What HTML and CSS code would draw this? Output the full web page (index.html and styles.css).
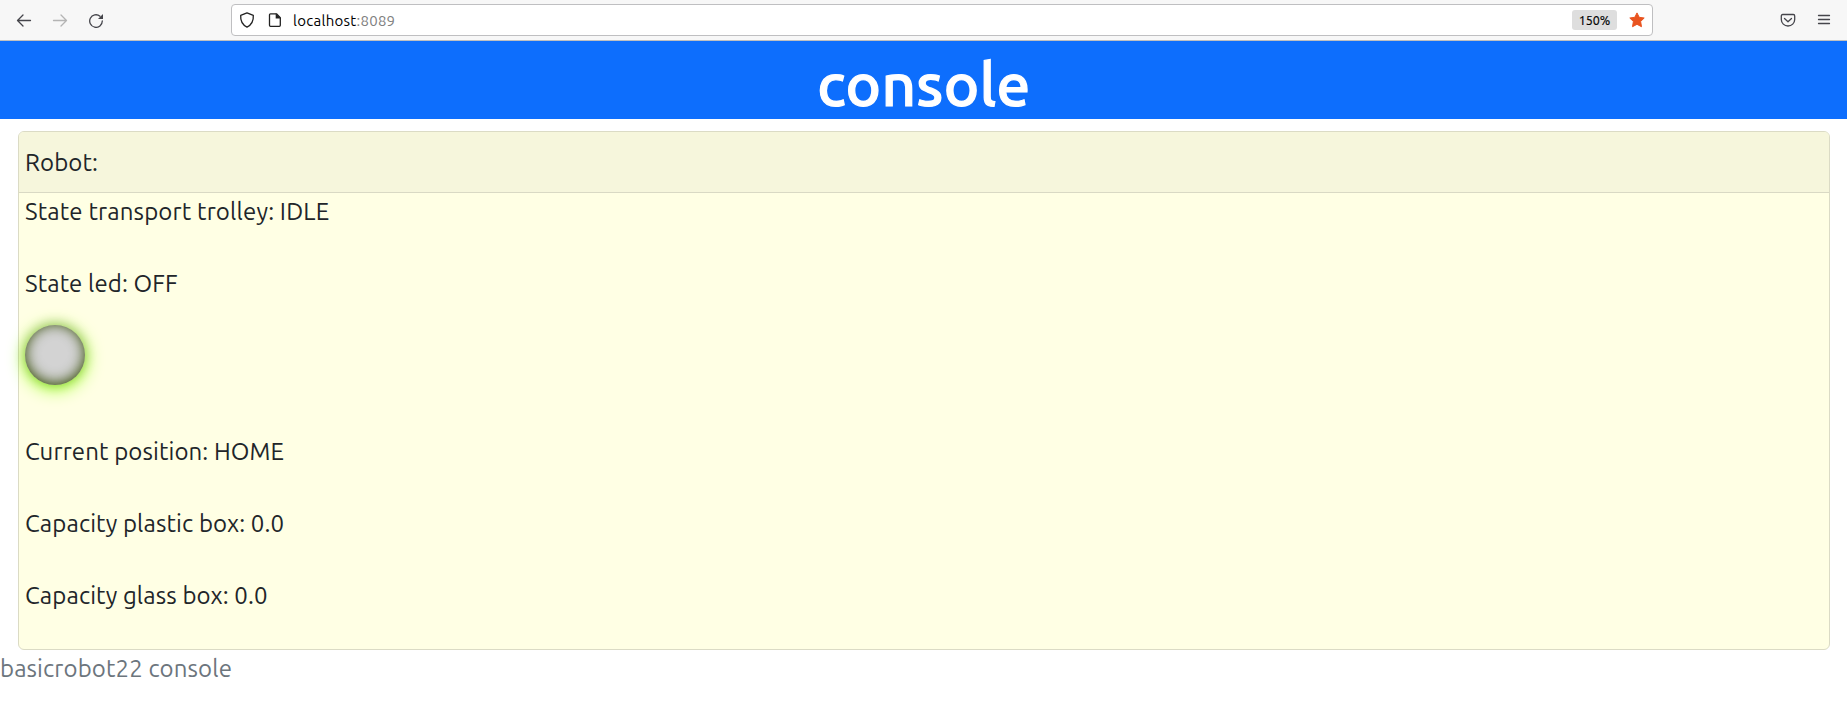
FILE: index.html
```html
<!DOCTYPE html>
<html lang="en">
<head>
<meta charset="utf-8">
<title>console</title>
<link rel="stylesheet" href="styles.css">
</head>
<body>
<div class="toolbar">
  <div class="nav">
    <svg class="icon" width="16" height="16" viewBox="0 0 16 16"><path d="M14.500 8.500H1.500M7 3L1.500 8.500L7 14"/></svg>
    <svg class="icon dim" width="16" height="16" viewBox="0 0 16 16"><path d="M1.500 8.500H14.500M9 3L14.500 8.500L9 14"/></svg>
    <svg class="icon" width="16" height="16" viewBox="0 0 16 16"><path d="M14.300 9A6.300 6.300 0 1 1 12 4.200"/><path class="solid" d="M15 2V7H10Z"/></svg>
  </div>
  <div class="urlbar">
    <svg class="icon dark" width="16" height="16" viewBox="0 0 16 16"><path d="M8 .9L14.300 3.300C14.700 8.600 12.600 12.800 8 15.200C3.400 12.800 1.300 8.600 1.700 3.300Z"/></svg>
    <svg class="icon dark page" width="14" height="16" viewBox="0 0 14 16"><path d="M2.500 1.800H8.500L12.300 5.600V13.300Q12.300 14.300 11.300 14.300H2.500Q1.500 14.300 1.500 13.300V2.800Q1.500 1.800 2.500 1.800Z"/><path class="solid" d="M7.700 1.200L13 6.500H7.700Z"/></svg>
    <span class="url">localhost<span class="port">:8089</span></span>
    <span class="zoom">150%</span>
    <svg class="star" width="16" height="16" viewBox="0 0 16 16"><path d="M8 .9L10.200 5.300L15.200 6L11.600 9.500L12.500 14.700L8 12.300L3.500 14.700L4.400 9.500L.8 6L5.800 5.300Z"/></svg>
  </div>
  <div class="tools">
    <svg class="icon" width="16" height="16" viewBox="0 0 16 16"><path d="M2.700 2.500H13.300Q14.700 2.500 14.700 3.900V7.500A6.700 6.500 0 0 1 1.300 7.500V3.900Q1.300 2.500 2.700 2.500ZM4.500 6.500L8 9.700L11.500 6.500"/></svg>
    <svg class="icon" width="16" height="16" viewBox="0 0 16 16"><path d="M2.500 3.500H13.500M2.500 7.500H13.500M2.500 11.500H13.500"/></svg>
  </div>
</div>
<header class="banner"><h1 class="title">console</h1></header>
<main class="card">
  <div class="card-head">Robot:</div>
  <div class="card-body">
    <p class="line trolley">State transport trolley: IDLE</p>
    <p class="line ledstate">State led: OFF</p>
    <div class="led"></div>
    <p class="line">Current position: HOME</p>
    <p class="line">Capacity plastic box: 0.0</p>
    <p class="line">Capacity glass box: 0.0</p>
  </div>
</main>
<footer class="footer">basicrobot22 console</footer>
</body>
</html>
```
FILE: styles.css
```css
* { box-sizing: border-box; }
body { margin: 0; background: #fff; color: #212529; font: 24px/36px Ubuntu, "Noto Sans", sans-serif; letter-spacing: .11px; overflow: hidden; }
.toolbar { height: 41px; display: flex; background: #f7f7f7; border-bottom: 1px solid #c0c0c0; letter-spacing: 0; }
.nav { width: 231px; padding: 12px 0 0 16px; display: flex; gap: 20px; }
.icon { display: block; flex: none; fill: none; stroke: #45454b; stroke-width: 1.3; stroke-linecap: round; stroke-linejoin: round; }
.icon .solid { fill: #45454b; stroke: none; }
.dim { stroke: #b4b4b4; }
.dark { stroke: #222; }
.dark .solid { fill: #222; }
.page { margin-left: 13px; }
.urlbar { width: 1422px; height: 32px; margin-top: 4px; padding: 0 7px; display: flex; align-items: center; background: #fff; border: 1px solid #bfbfc1; border-radius: 4px; }
.url { margin-left: 11px; font-size: 15px; line-height: 20px; letter-spacing: .27px; color: #000; position: relative; top: 1px; }
.port { color: #808080; }
.zoom { margin-left: auto; margin-right: 12px; width: 45px; height: 20px; border-radius: 3px; background: #dedede; font-size: 12.5px; line-height: 21px; text-align: center; color: #000; -webkit-text-stroke: .2px #000; }
.star { display: block; fill: #e95420; stroke: #e95420; stroke-width: 1; stroke-linejoin: round; }
.tools { margin-left: auto; padding: 12px 15px 0 0; display: flex; gap: 20px; }
.banner { height: 78px; background: #0d6efd; color: #fff; text-align: center; }
.title { margin: 0; padding: 7px 0 0 1px; font-family: "Ubuntu Medium", Ubuntu, "Noto Sans", sans-serif; font-size: 60px; line-height: 72px; font-weight: 500; letter-spacing: .3px; -webkit-text-stroke: 1.2px #fff; }
.card { margin: 12px 17px 0 18px; height: 519px; background: #ffffe4; border: 1px solid #dbdbc5; border-radius: 6px; }
.card-head { height: 61px; padding: 13px 6px 0; background: #f6f6dc; border-bottom: 1px solid #d9d9c4; border-radius: 5px 5px 0 0; }
.card-body { padding: 0 6px; }
.line { margin: 0 0 36px; padding-top: 1px; height: 36px; white-space: nowrap; }
.trolley { letter-spacing: .16px; }
.ledstate { margin-bottom: 24px; }
.led { width: 60px; height: 60px; margin-bottom: 48px; border-radius: 50%; background: #d3d3d3; box-shadow: rgba(0,0,0,.2) 0 -1.5px 10.5px 1.5px, inset #304701 0 -1.5px 13.5px, #89ff00 0 3px 18px; }
.footer { color: #6c757d; height: 37px; padding-top: 1px; }
```
